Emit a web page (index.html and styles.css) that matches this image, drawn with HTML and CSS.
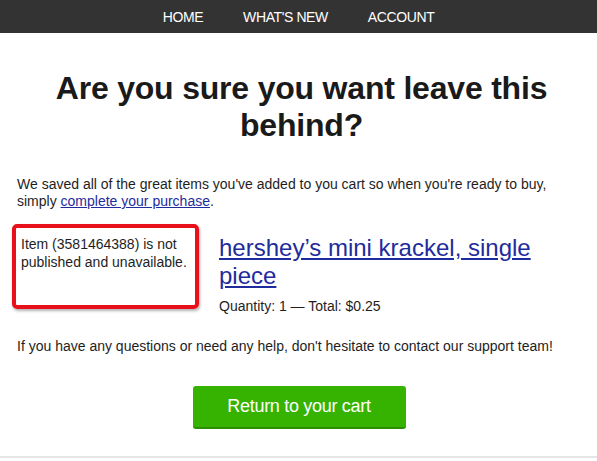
FILE: index.html
```html
<!DOCTYPE html>
<html lang="en">
<head>
    <meta charset="UTF-8">
    <meta name="viewport" content="width=device-width, initial-scale=1.0">
    <title>Your cart</title>
    <link rel="stylesheet" href="styles.css">
</head>
<body>

    <header>
        <nav class="topnav">
            <a href="#">HOME</a>
            <a href="#">WHAT'S NEW</a>
            <a href="#">ACCOUNT</a>
        </nav>
    </header>

    <main>
        <h1>Are you sure you want leave this behind?</h1>

        <p class="intro">
            We saved all of the great items you've added to you cart so when you're ready to buy,
            simply <a href="#">complete your purchase</a>.
        </p>

        <div class="cart-item">
            <div class="item-note">Item (3581464388) is not published and unavailable.</div>
            <div class="item-info">
                <a class="item-title" href="#">hershey’s mini krackel, single piece</a>
                <p class="item-meta">Quantity: 1 — Total: $0.25</p>
            </div>
        </div>

        <p class="help">If you have any questions or need any help, don't hesitate to contact our support team!</p>

        <div class="button-container">
            <a class="btn-cart" href="#">Return to your cart</a>
        </div>
    </main>

</body>
</html>
```

FILE: styles.css
```css
* {
    margin: 0;
    padding: 0;
    box-sizing: border-box;
}

body {
    font-family: 'Liberation Sans', Arial, sans-serif;
    background-color: #fff;
    color: #1e1e1e;
}

a {
    color: #1f2c9c;
}

.topnav {
    height: 33px;
    background-color: #333;
    display: flex;
    justify-content: center;
    align-items: center;
    gap: 40px;
}

.topnav a {
    color: #fff;
    font-size: 14px;
    letter-spacing: -0.4px;
    text-decoration: none;
}

main {
    padding: 0 11px 27px 17px;
    border-bottom: 2px solid #e6e6e6;
}

h1 {
    margin-top: 37px;
    font-size: 32px;
    line-height: 37px;
    letter-spacing: -0.2px;
    text-align: center;
    color: #1a1a1a;
}

.intro {
    margin-top: 32px;
    font-size: 14px;
    line-height: 17px;
}

.cart-item {
    display: flex;
    gap: 20px;
    margin-top: 14px;
}

.item-note {
    flex: 0 0 187px;
    height: 85px;
    margin-left: -5px;
    padding: 7px 5px;
    font-size: 14px;
    line-height: 18px;
    border: 4px solid #e8101a;
    border-radius: 5px;
    box-shadow: 1px 2px 3px rgba(0, 0, 0, 0.3);
}

.item-info {
    padding-top: 10px;
}

.item-title {
    display: block;
    font-size: 24px;
    line-height: 28px;
}

.item-meta {
    margin-top: 8px;
    font-size: 14px;
    line-height: 17px;
}

.help {
    margin-top: 23px;
    font-size: 14px;
    line-height: 17px;
}

.button-container {
    display: flex;
    justify-content: center;
    margin-top: 31px;
    margin-left: -5px;
}

.btn-cart {
    width: 213px;
    height: 43px;
    display: flex;
    justify-content: center;
    align-items: center;
    background-color: #36b300;
    border-bottom: 2px solid #2b8f00;
    border-radius: 3px;
    color: #fff;
    font-size: 18px;
    letter-spacing: -0.3px;
    text-decoration: none;
}
```
